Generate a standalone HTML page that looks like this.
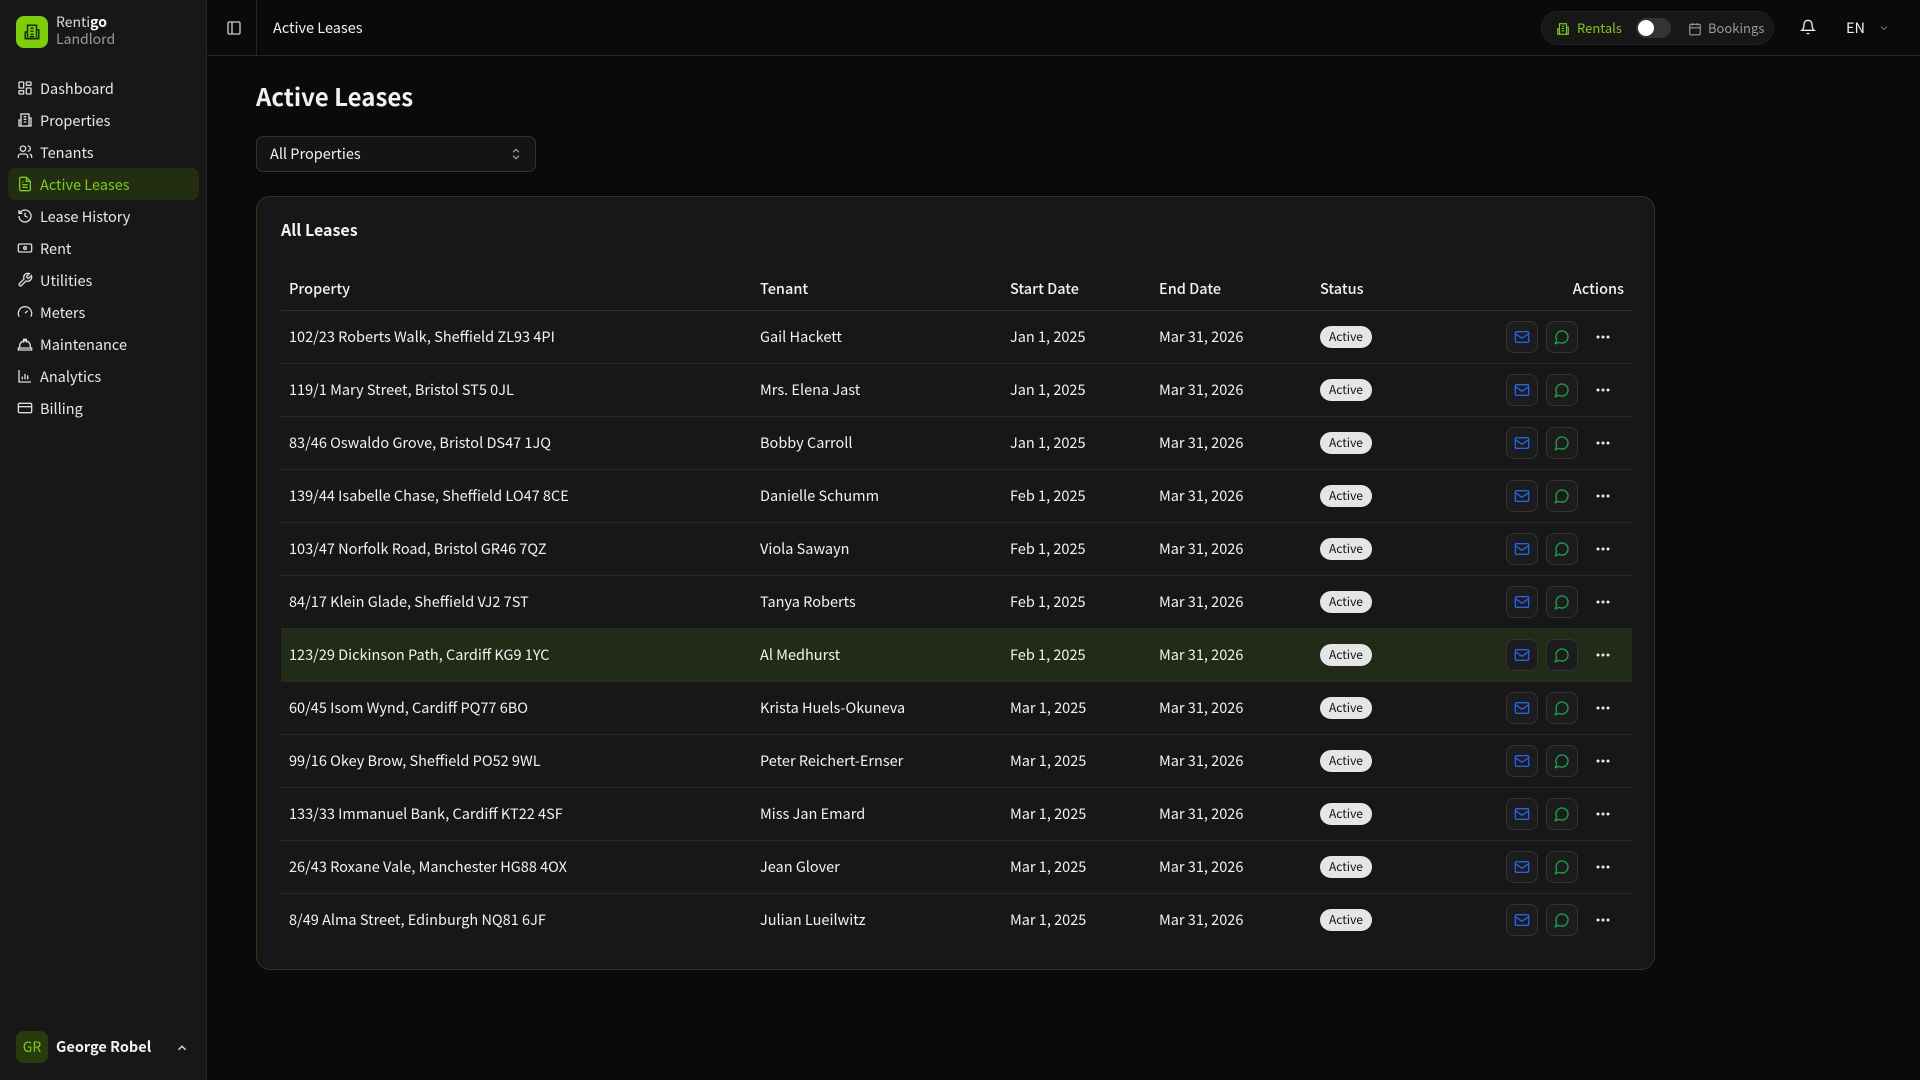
<!DOCTYPE html>
<html><head><meta charset="utf-8"><style>
*{box-sizing:border-box;margin:0;padding:0}
body{width:1920px;height:1080px;background:#0a0a0a;font-family:"Noto Sans CJK SC","Liberation Sans",sans-serif;color:#f2f2f2;overflow:hidden;position:relative}
.sb{position:absolute;left:0;top:0;width:207px;height:1080px;background:#171717;border-right:1px solid #262626}
.logo{position:absolute;left:16px;top:16px;width:32px;height:32px;border-radius:8px;background:#7ccf00;display:flex;align-items:center;justify-content:center}
.brand{position:absolute;left:56px;top:14px;font-size:14px;line-height:17px;color:#ddd}
.brand .l{color:#9a9a9a}
.nav{position:absolute;left:8px;top:72px;width:191px}
.nav div{height:32px;display:flex;align-items:center;padding-left:9px;font-size:14.5px;color:#e8e8e8;border-radius:7px}
.nav div svg{width:16px;height:16px;margin-right:7px;flex:none}
.nav .act{background:#232d12;color:#7ccf00}
.user{position:absolute;left:16px;top:1031px;width:32px;height:32px;border-radius:8px;background:#2a3a0e;color:#7ccf00;font-size:14px;display:flex;align-items:center;justify-content:center}
.uname{position:absolute;left:56px;top:1036px;font-size:14.5px;font-weight:bold}
.hdr{position:absolute;left:207px;top:0;right:0;height:56px;border-bottom:1px solid #262626}
.hdr .div{position:absolute;left:49px;top:0;width:1px;height:55px;background:#262626}
.toggle{position:absolute;left:1541px;top:11px;width:233px;height:34px;border-radius:17px;background:#171717;border:1px solid #222}
h1{position:absolute;left:256px;top:78px;font-size:24px;font-weight:bold}
.sel{position:absolute;left:256px;top:136px;width:280px;height:36px;border:1px solid #333;border-radius:7px;background:#141414;font-size:14.5px;padding-left:13px;line-height:34px}
.card{position:absolute;left:256px;top:196px;width:1399px;height:774px;background:#171717;border:1px solid #2e3a17;border-radius:14px}
.card h2{position:absolute;left:24px;top:20px;font-size:16px;font-weight:bold}
table{position:absolute;left:24px;top:71px;width:1351px;border-collapse:collapse;font-size:14.5px}
th{text-align:left;font-weight:500;height:42px;padding-left:8px;border-bottom:1px solid #2e2e2e}
td{height:53px;padding-left:8px;border-bottom:1px solid #2a2a2a}
tr:last-child td{border-bottom:none}
tr.hl td{background:#222a18}
.b{display:inline-block;background:#e5e5e5;color:#111;font-size:12px;border-radius:11px;padding:0 9px;height:22px;line-height:22px}
.acts{display:flex;justify-content:flex-end;align-items:center;padding-right:12px}
.ab{display:inline-flex;width:32px;height:32px;border:1px solid #333;border-radius:8px;background:#1c1c1c;align-items:center;justify-content:center;margin-left:8px}
.dots{display:flex;width:34px;margin-left:8px;justify-content:center;align-items:center;height:32px}
</style></head><body>
<div class="sb">
<div class="logo"><svg width="18" height="18" viewBox="0 0 24 24" fill="none" stroke="#1a2a00" stroke-width="2"><rect x="6" y="3" width="12" height="18"/><path d="M6 12H3v9h3M18 9h3v12h-3M10 7h4M10 11h4M10 15h4M10 21v-3h4v3"/></svg></div>
<div class="brand">Renti<b style="color:#fff">go</b><br><span class="l">Landlord</span></div>
<div class="nav">
<div><svg viewBox="0 0 24 24" fill="none" stroke="#ddd" stroke-width="2"><rect x="3" y="3" width="7" height="9" rx="1"/><rect x="14" y="3" width="7" height="5" rx="1"/><rect x="14" y="12" width="7" height="9" rx="1"/><rect x="3" y="16" width="7" height="5" rx="1"/></svg>Dashboard</div>
<div><svg viewBox="0 0 24 24" fill="none" stroke="#ddd" stroke-width="2"><rect x="6" y="3" width="12" height="18"/><path d="M6 12H3v9h3M18 9h3v12h-3M10 7h4M10 11h4M10 15h4"/></svg>Properties</div>
<div><svg viewBox="0 0 24 24" fill="none" stroke="#ddd" stroke-width="2"><circle cx="9" cy="7" r="4"/><path d="M2 21v-2a4 4 0 0 1 4-4h6a4 4 0 0 1 4 4v2M16 3a4 4 0 0 1 0 8M22 21v-2a4 4 0 0 0-3-4"/></svg>Tenants</div>
<div class="act"><svg viewBox="0 0 24 24" fill="none" stroke="#7ccf00" stroke-width="2"><path d="M14 2H6a2 2 0 0 0-2 2v16a2 2 0 0 0 2 2h12a2 2 0 0 0 2-2V8z"/><path d="M14 2v6h6M8 13h8M8 17h8M8 9h2"/></svg>Active Leases</div>
<div><svg viewBox="0 0 24 24" fill="none" stroke="#ddd" stroke-width="2"><path d="M3 12a9 9 0 1 0 3-6.7L3 8M3 3v5h5M12 7v5l4 2"/></svg>Lease History</div>
<div><svg viewBox="0 0 24 24" fill="none" stroke="#ddd" stroke-width="2"><rect x="2" y="6" width="20" height="12" rx="2"/><circle cx="12" cy="12" r="2"/><path d="M6 12h.01M18 12h.01"/></svg>Rent</div>
<div><svg viewBox="0 0 24 24" fill="none" stroke="#ddd" stroke-width="2"><path d="M14.7 6.3a1 1 0 0 0 0 1.4l1.6 1.6a1 1 0 0 0 1.4 0l3.8-3.8a6 6 0 0 1-7.9 7.9l-6.9 6.9a2.1 2.1 0 0 1-3-3l6.9-6.9a6 6 0 0 1 7.9-7.9z"/></svg>Utilities</div>
<div><svg viewBox="0 0 24 24" fill="none" stroke="#ddd" stroke-width="2"><path d="M12 14l4-4M3.3 19a10 10 0 1 1 17.4 0"/></svg>Meters</div>
<div><svg viewBox="0 0 24 24" fill="none" stroke="#ddd" stroke-width="2"><path d="M2 18h20v3H2zM10 10V5h4v5M4 18v-3a8 8 0 0 1 16 0v3"/></svg>Maintenance</div>
<div><svg viewBox="0 0 24 24" fill="none" stroke="#ddd" stroke-width="2"><path d="M3 3v18h18M8 17v-4M12 17V9M16 17v-6"/></svg>Analytics</div>
<div><svg viewBox="0 0 24 24" fill="none" stroke="#ddd" stroke-width="2"><rect x="2" y="5" width="20" height="14" rx="2"/><path d="M2 10h20"/></svg>Billing</div>
</div>
<div class="user">GR</div><div class="uname">George Robel</div>
<svg style="position:absolute;left:175px;top:1041px" width="14" height="14" viewBox="0 0 24 24" fill="none" stroke="#ddd" stroke-width="2.5"><path d="M6 15l6-6 6 6"/></svg>
</div>
<div class="hdr">
<svg style="position:absolute;left:19px;top:20px" width="16" height="16" viewBox="0 0 24 24" fill="none" stroke="#ccc" stroke-width="2"><rect x="3" y="3" width="18" height="18" rx="2"/><path d="M9 3v18"/></svg>
<div class="div"></div>
<div style="position:absolute;left:66px;top:17px;font-size:14.5px">Active Leases</div>
</div>
<div class="toggle">
<svg style="position:absolute;left:14px;top:10px" width="14" height="14" viewBox="0 0 24 24" fill="none" stroke="#7ccf00" stroke-width="2"><rect x="6" y="3" width="12" height="18"/><path d="M6 12H3v9h3M18 9h3v12h-3M10 7h4M10 11h4M10 15h4"/></svg>
<span style="position:absolute;left:35px;top:6px;font-size:13px;color:#7ccf00">Rentals</span>
<div style="position:absolute;left:94px;top:6px;width:35px;height:20px;border-radius:10px;background:#333"><div style="position:absolute;left:2px;top:2px;width:16px;height:16px;border-radius:8px;background:#fff"></div></div>
<svg style="position:absolute;left:146px;top:10px" width="14" height="14" viewBox="0 0 24 24" fill="none" stroke="#999" stroke-width="2"><rect x="3" y="4" width="18" height="18" rx="2"/><path d="M16 2v4M8 2v4M3 10h18"/></svg>
<span style="position:absolute;left:166px;top:6px;font-size:13px;color:#9a9a9a">Bookings</span>
</div>
<svg style="position:absolute;left:1800px;top:19px" width="16" height="16" viewBox="0 0 24 24" fill="none" stroke="#eee" stroke-width="2"><path d="M6 8a6 6 0 0 1 12 0c0 7 3 9 3 9H3s3-2 3-9M10.3 21a1.9 1.9 0 0 0 3.4 0"/></svg>
<div style="position:absolute;left:1846px;top:17px;font-size:14.5px">EN</div>
<svg style="position:absolute;left:1878px;top:22px" width="12" height="12" viewBox="0 0 24 24" fill="none" stroke="#777" stroke-width="2"><path d="M6 9l6 6 6-6"/></svg>
<h1>Active Leases</h1>
<div class="sel">All Properties<svg style="position:absolute;right:12px;top:10px" width="14" height="14" viewBox="0 0 24 24" fill="none" stroke="#aaa" stroke-width="2"><path d="M7 15l5 5 5-5M7 9l5-5 5 5"/></svg></div>
<div class="card"><h2>All Leases</h2>
<table id="t">
<colgroup><col style="width:471px"><col style="width:250px"><col style="width:149px"><col style="width:161px"><col style="width:150px"><col></colgroup>
<tr><th>Property</th><th>Tenant</th><th>Start Date</th><th>End Date</th><th>Status</th><th style="text-align:right;padding-right:8px">Actions</th></tr>
</table></div>
<script>
const d=[["102/23 Roberts Walk, Sheffield ZL93 4PI","Gail Hackett","Jan 1, 2025"],["119/1 Mary Street, Bristol ST5 0JL","Mrs. Elena Jast","Jan 1, 2025"],["83/46 Oswaldo Grove, Bristol DS47 1JQ","Bobby Carroll","Jan 1, 2025"],["139/44 Isabelle Chase, Sheffield LO47 8CE","Danielle Schumm","Feb 1, 2025"],["103/47 Norfolk Road, Bristol GR46 7QZ","Viola Sawayn","Feb 1, 2025"],["84/17 Klein Glade, Sheffield VJ2 7ST","Tanya Roberts","Feb 1, 2025"],["123/29 Dickinson Path, Cardiff KG9 1YC","Al Medhurst","Feb 1, 2025"],["60/45 Isom Wynd, Cardiff PQ77 6BO","Krista Huels-Okuneva","Mar 1, 2025"],["99/16 Okey Brow, Sheffield PO52 9WL","Peter Reichert-Ernser","Mar 1, 2025"],["133/33 Immanuel Bank, Cardiff KT22 4SF","Miss Jan Emard","Mar 1, 2025"],["26/43 Roxane Vale, Manchester HG88 4OX","Jean Glover","Mar 1, 2025"],["8/49 Alma Street, Edinburgh NQ81 6JF","Julian Lueilwitz","Mar 1, 2025"]];
const mail='<svg width="16" height="16" viewBox="0 0 24 24" fill="none" stroke="#2563eb" stroke-width="2"><rect x="2" y="4" width="20" height="16" rx="2"/><path d="M22 7l-10 7L2 7"/></svg>';
const chat='<svg width="16" height="16" viewBox="0 0 24 24" fill="none" stroke="#16a34a" stroke-width="2"><path d="M7.9 20A9 9 0 1 0 4 16.1L2 22z"/></svg>';
const dots='<svg width="14" height="4" viewBox="0 0 14 4"><circle cx="2" cy="2" r="1.5" fill="#eee"/><circle cx="7" cy="2" r="1.5" fill="#eee"/><circle cx="12" cy="2" r="1.5" fill="#eee"/></svg>';
let h='';d.forEach((r,i)=>{h+=`<tr${i==6?' class="hl"':''}><td>${r[0]}</td><td>${r[1]}</td><td>${r[2]}</td><td>Mar 31, 2026</td><td><span class="b">Active</span></td><td><div class="acts"><span class="ab">${mail}</span><span class="ab">${chat}</span><span class="dots">${dots}</span></div></td></tr>`});
document.getElementById('t').insertAdjacentHTML('beforeend',h);
</script>
</body></html>
